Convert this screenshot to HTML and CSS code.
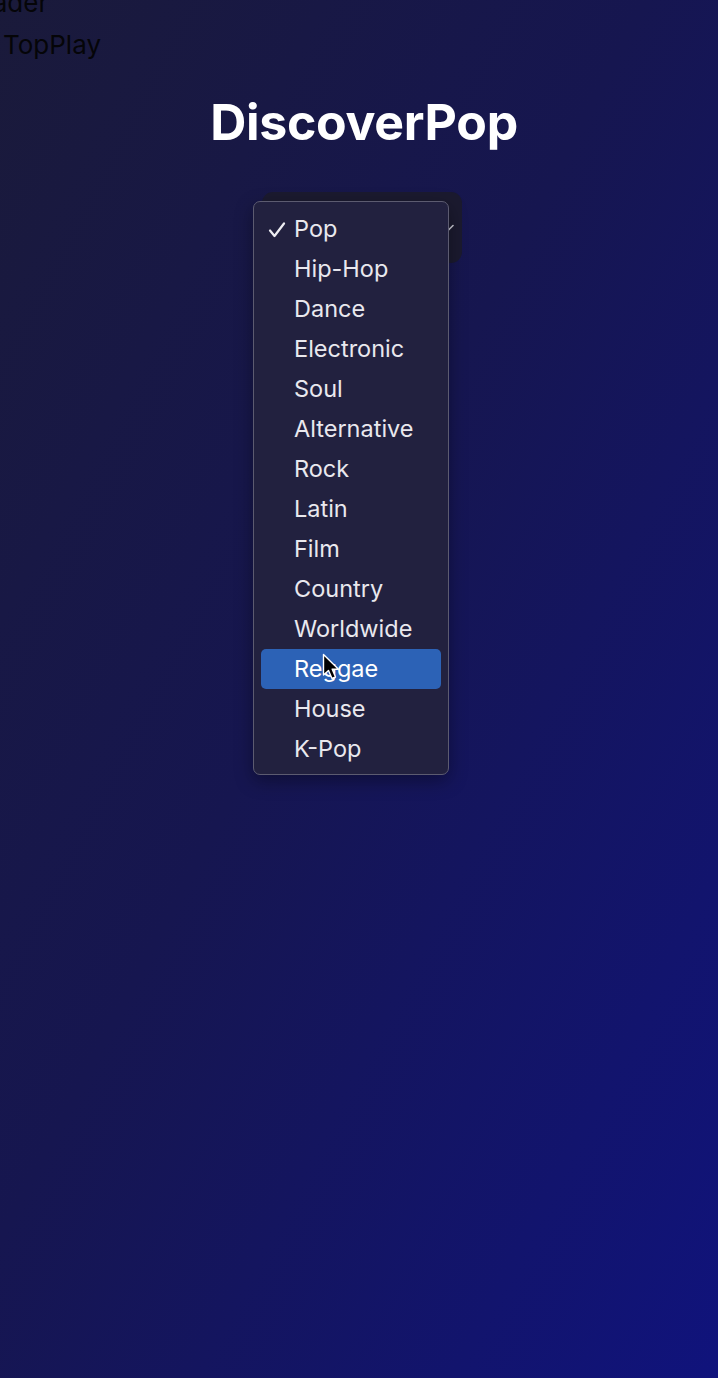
FILE: index.html
```html
<!DOCTYPE html>
<html>
<head>
<meta charset="utf-8">
<link rel="stylesheet" href="styles.css">
</head>
<body>
<header class="top">
  <div class="top-line first">Header</div>
  <div class="top-line">TopPlay</div>
</header>
<main class="main">
  <h1 class="title">DiscoverPop</h1>
  <div class="picker">
    <div class="select-btn">
      <svg class="chev" width="12" height="8" viewBox="0 0 12 8"><path d="M1 1.5 L6 6.5 L11 1.5" fill="none" stroke="#c9c9d4" stroke-width="1.6" stroke-linecap="round" stroke-linejoin="round"/></svg>
    </div>
    <ul class="menu">
      <li class="item"><svg class="check" width="18" height="16" viewBox="0 0 18 16"><path d="M2 8.5 L6.5 14 L16 1.5" fill="none" stroke="#ededf2" stroke-width="2.2" stroke-linecap="round" stroke-linejoin="round"/></svg>Pop</li>
      <li class="item">Hip-Hop</li>
      <li class="item">Dance</li>
      <li class="item">Electronic</li>
      <li class="item">Soul</li>
      <li class="item">Alternative</li>
      <li class="item">Rock</li>
      <li class="item">Latin</li>
      <li class="item">Film</li>
      <li class="item">Country</li>
      <li class="item">Worldwide</li>
      <li class="item active">Reggae</li>
      <li class="item">House</li>
      <li class="item">K-Pop</li>
    </ul>
    <svg class="cursor" width="18" height="28" viewBox="0 0 18 28"><path d="M1.5 1.5 L1.5 22 L6.5 17.5 L10 25.5 L13.5 24 L10.2 16.2 L16.5 16.2 Z" fill="#000" stroke="#fff" stroke-width="1.4" stroke-linejoin="round"/></svg>
  </div>
</main>
</body>
</html>
```

FILE: styles.css
```css
html, body {
  margin: 0;
  padding: 0;
}
body {
  width: 718px;
  min-height: 1378px;
  overflow: hidden;
  background: linear-gradient(to bottom right, #1a1a3a 0%, #161650 45%, #10137c 100%);
  font-family: Inter, "Noto Sans", sans-serif;
}
.top {
  margin-left: -42px;
  margin-top: -17px;
  color: #050508;
  font-size: 26px;
}
.top-line {
  line-height: 43px;
  white-space: nowrap;
}
.top-line.first {
  line-height: 40px;
}
.top-line:not(.first) {
  padding-left: 45px;
}
.main {
  display: flex;
  flex-direction: column;
  align-items: center;
  padding-left: 6px;
}
.title {
  margin: 26px 0 0 4px;
  font-size: 50px;
  line-height: 60px;
  font-weight: 700;
  color: #ffffff;
  letter-spacing: -0.3px;
}
.picker {
  position: relative;
  margin-top: 40px;
  width: 200px;
  height: 71px;
}
.select-btn {
  width: 200px;
  height: 71px;
  border-radius: 11px;
  background: #1b1a2f;
  display: flex;
  align-items: center;
  justify-content: flex-end;
  padding-right: 8px;
  box-sizing: border-box;
}
.chev {
  display: block;
}
.menu {
  position: absolute;
  left: -9px;
  top: 9px;
  width: 196px;
  box-sizing: border-box;
  margin: 0;
  padding: 7px 7px 5px 7px;
  list-style: none;
  background: #22213f;
  border: 1px solid #5c5b70;
  border-radius: 7px;
  box-shadow: 0 6px 18px rgba(0, 0, 0, 0.35);
}
.item {
  position: relative;
  height: 40px;
  line-height: 40px;
  padding-left: 33px;
  font-size: 23.5px;
  color: #e9e8ee;
  border-radius: 5px;
}
.item.active {
  background: #2c62b6;
  color: #ffffff;
}
.check {
  position: absolute;
  left: 7px;
  top: 13px;
}
.cursor {
  position: absolute;
  left: 60px;
  top: 461px;
}
```
